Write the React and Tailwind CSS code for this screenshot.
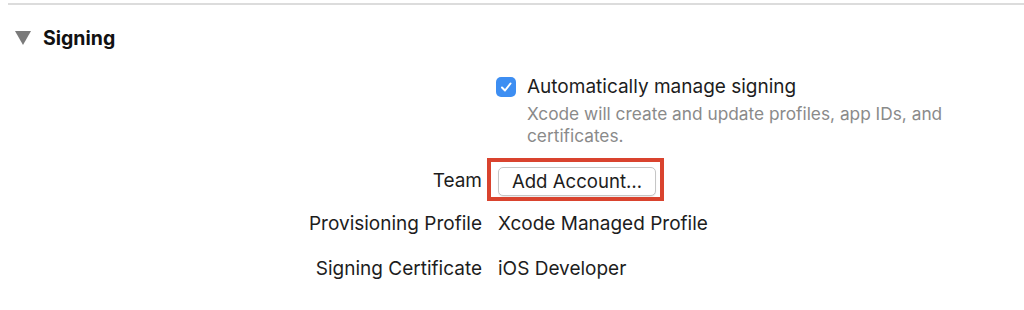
import React from "react";

function Row({ label, children, className = "" }) {
  return (
    <div className={"flex items-center " + className}>
      <div className="w-[484px] shrink-0 text-right pr-[2px]">{label}</div>
      <div className="pl-[14px]">{children}</div>
    </div>
  );
}

export default function App() {
  return (
    <div
      className="w-[1024px] h-[310px] bg-white text-[#1d1d1d] overflow-hidden"
      style={{ fontFamily: '"Inter", "Liberation Sans", sans-serif' }}
    >
      <div className="ml-[8px] mt-[3px] h-[2px] bg-[#dcdcdc]"></div>

      <div className="flex items-center h-[28px] mt-[19px] pl-[15px]">
        <svg width="16" height="15" viewBox="0 0 16 15" className="mr-[12px]">
          <polygon points="0,0 16,0 8,14" fill="#7a7a7a" />
        </svg>
        <span className="text-[19.5px] leading-[28px] font-bold text-[#111]">Signing</span>
      </div>

      <div className="flex mt-[24px]">
        <div className="w-[484px] shrink-0"></div>
        <div className="pl-[12px]">
          <label className="flex items-center gap-[11px] h-[22px]">
            <span className="w-[20px] h-[20px] rounded-[5px] bg-[#3d8ef2] flex items-center justify-center">
              <svg width="14" height="14" viewBox="0 0 14 14">
                <path d="M3 7.5 L6 10.5 L11.5 3.5" fill="none" stroke="white" strokeWidth="2" strokeLinecap="round" strokeLinejoin="round" />
              </svg>
            </span>
            <span className="text-[19px] leading-[22px]">Automatically manage signing</span>
          </label>
          <p className="ml-[31px] mt-[5px] text-[17.3px] leading-[22px] text-[#8a8a8a] w-[440px]">
            Xcode will create and update profiles, app IDs, and certificates.
          </p>
        </div>
      </div>

      <Row label={<span className="text-[19px]">Team</span>} className="mt-[19px] h-[30px]">
        <div className="relative">
          <div className="absolute -left-[11px] -right-[8px] -top-[9px] -bottom-[5px] border-[4px] border-[#d9432e]"></div>
          <button className="h-[29px] w-[158px] rounded-[5px] border border-[#c6c6c6] bg-white text-[18.6px] leading-[27px] shadow-[0_1px_1px_rgba(0,0,0,0.08)]">
            Add Account…
          </button>
        </div>
      </Row>

      <Row label={<span className="text-[19px]">Provisioning Profile</span>} className="mt-[13px] h-[30px]">
        <span className="text-[19px]">Xcode Managed Profile</span>
      </Row>

      <Row label={<span className="text-[19px]">Signing Certificate</span>} className="mt-[15px] h-[30px]">
        <span className="text-[19px]">iOS Developer</span>
      </Row>
    </div>
  );
}
